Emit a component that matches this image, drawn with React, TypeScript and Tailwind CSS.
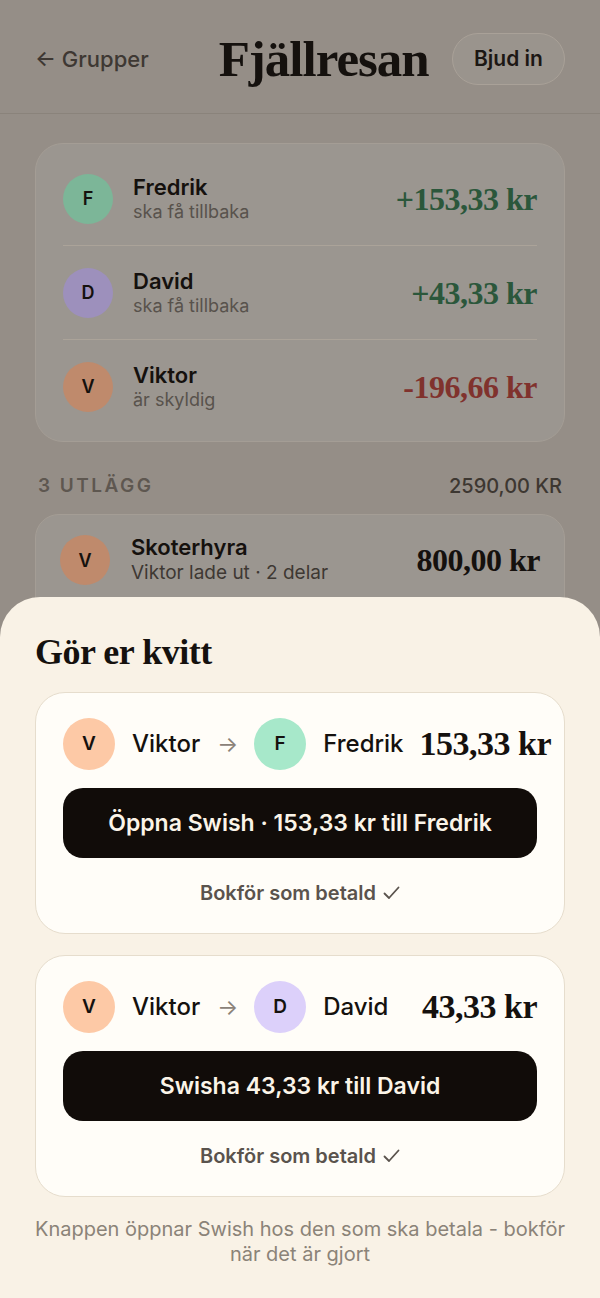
import React from "react";

const serif = "font-['Liberation_Serif','Times_New_Roman',serif]";

function BackRow({
  initial,
  name,
  sub,
  amount,
  avatar,
  amountColor,
}: {
  initial: string;
  name: string;
  sub: string;
  amount: string;
  avatar: string;
  amountColor: string;
}) {
  return (
    <div className="flex h-[93px] items-center gap-5">
      <div
        className={`flex h-[50px] w-[50px] shrink-0 items-center justify-center rounded-full text-[18px] font-semibold text-[#15110e] ${avatar}`}
      >
        {initial}
      </div>
      <div className="flex flex-col">
        <span className="text-[22px] font-semibold leading-[25px] text-[#15110e]">{name}</span>
        <span className="text-[18px] leading-[23px] text-[#58524c]">{sub}</span>
      </div>
      <span className={`ml-auto text-[32px] font-bold leading-none tracking-[-0.5px] ${serif} ${amountColor}`}>
        {amount}
      </span>
    </div>
  );
}

function Avatar({ initial, color }: { initial: string; color: string }) {
  return (
    <div
      className={`flex h-[52px] w-[52px] shrink-0 items-center justify-center rounded-full text-[19px] font-semibold text-[#15110e] ${color}`}
    >
      {initial}
    </div>
  );
}

function Check() {
  return (
    <svg width="17" height="14" viewBox="0 0 17 14" className="ml-[7px] inline-block">
      <path d="M1.5 7.5 L6 12 L15.5 1.5" fill="none" stroke="currentColor" strokeWidth="1.8" strokeLinecap="round" strokeLinejoin="round" />
    </svg>
  );
}

function SettleCard({
  toInitial,
  toName,
  toColor,
  amount,
  button,
  className,
}: {
  toInitial: string;
  toName: string;
  toColor: string;
  amount: string;
  button: string;
  className?: string;
}) {
  return (
    <div
      className={`rounded-[30px] border border-[#e6ddcd] bg-[#fffdf8] px-[27px] pb-[28px] pt-[25px] ${className ?? ""}`}
    >
      <div className="flex items-center justify-between gap-4">
        <div className="flex shrink-0 items-center">
          <Avatar initial="V" color="bg-[#fdc9a6]" />
          <span className="ml-[17px] text-[24px] font-medium text-[#15110e]">Viktor</span>
          <span className="ml-[17px] text-[22px] leading-none text-[#8a8279]">→</span>
          <div className="ml-[16px]">
            <Avatar initial={toInitial} color={toColor} />
          </div>
          <span className="ml-[17px] text-[24px] font-medium text-[#15110e]">{toName}</span>
        </div>
        <span className={`shrink-0 whitespace-nowrap text-[34px] font-bold leading-none tracking-[-0.5px] text-[#15110e] ${serif}`}>
          {amount}
        </span>
      </div>
      <button className="mt-[18px] flex h-[70px] w-full items-center justify-center rounded-[20px] bg-[#110c09] text-[23px] font-semibold text-[#fbf4e8]">
        {button}
      </button>
      <div className="mt-[23px] flex items-center justify-center text-[20px] font-semibold leading-[24px] text-[#5a534d]">
        <span>Bokför som betald</span>
        <Check />
      </div>
    </div>
  );
}

export default function App() {
  return (
    <div className="relative h-[1298px] w-full overflow-hidden bg-[#958e87] font-['Inter','Noto_Sans',sans-serif]">
      {/* dimmed page behind the sheet */}
      <header className="flex items-center border-b border-[#8a837b] px-[35px] pb-[28px] pt-[33px]">
        <span className="text-[22px] font-medium text-[#3e3833]">← Grupper</span>
        <h1 className={`ml-[70px] text-[51px] font-bold leading-none tracking-[-1px] text-[#15110e] ${serif}`}>
          Fjällresan
        </h1>
        <button className="ml-auto flex h-[52px] w-[113px] items-center justify-center rounded-full border border-[#a9a198] bg-[#9a948d] text-[21px] font-semibold text-[#1c1714]">
          Bjud in
        </button>
      </header>

      <div className="mx-[35px] mt-[29px] rounded-[28px] border border-[#a49d95] bg-[#9b9690] px-[27px] py-[8px]">
        <BackRow
          initial="F"
          name="Fredrik"
          sub="ska få tillbaka"
          amount="+153,33 kr"
          avatar="bg-[#7cb698]"
          amountColor="text-[#2b573b]"
        />
        <div className="h-px bg-[#aba399]" />
        <BackRow
          initial="D"
          name="David"
          sub="ska få tillbaka"
          amount="+43,33 kr"
          avatar="bg-[#9d90bc]"
          amountColor="text-[#2b573b]"
        />
        <div className="h-px bg-[#aba399]" />
        <BackRow
          initial="V"
          name="Viktor"
          sub="är skyldig"
          amount="-196,66 kr"
          avatar="bg-[#bf8a6c]"
          amountColor="text-[#80322d]"
        />
      </div>

      <div className="mx-[38px] mt-[32px] flex items-center justify-between leading-[24px]">
        <span className="text-[19px] font-semibold tracking-[0.13em] text-[#5e5750]">3 UTLÄGG</span>
        <span className="text-[20px] font-medium text-[#3d3731]">2590,00 KR</span>
      </div>

      <div className="mx-[35px] mt-[16px] h-[120px] rounded-[24px] border border-[#a49d95] bg-[#9b9690] px-[24px] pt-[20px]">
        <div className="flex items-center gap-[21px]">
          <div className="flex h-[50px] w-[50px] shrink-0 items-center justify-center rounded-full bg-[#bf8a6c] text-[18px] font-semibold text-[#15110e]">
            V
          </div>
          <div className="flex flex-col">
            <span className="text-[22px] font-semibold leading-[25px] text-[#15110e]">Skoterhyra</span>
            <span className="text-[19px] leading-[25px] text-[#3e3833]">Viktor lade ut · 2 delar</span>
          </div>
          <span className={`ml-auto text-[32px] font-bold leading-none tracking-[-0.5px] text-[#15110e] ${serif}`}>
            800,00 kr
          </span>
        </div>
      </div>

      {/* bottom sheet */}
      <div className="absolute inset-x-0 bottom-0 top-[597px] rounded-t-[40px] bg-[#f9f2e6] px-[35px] pt-[35px]">
        <h2 className={`text-[36px] font-bold leading-[40px] tracking-[-0.5px] text-[#15110e] ${serif}`}>
          Gör er kvitt
        </h2>
        <SettleCard
          className="mt-[20px]"
          toInitial="F"
          toName="Fredrik"
          toColor="bg-[#a7e8ca]"
          amount="153,33 kr"
          button="Öppna Swish · 153,33 kr till Fredrik"
        />
        <SettleCard
          className="mt-[21px]"
          toInitial="D"
          toName="David"
          toColor="bg-[#dcd0fa]"
          amount="43,33 kr"
          button="Swisha 43,33 kr till David"
        />
        <p className="-mx-[20px] mt-[20px] text-center text-[20px] leading-[25px] text-[#8b8378]">
          <span className="block whitespace-nowrap">Knappen öppnar Swish hos den som ska betala - bokför</span>
          <span className="block whitespace-nowrap">när det är gjort</span>
        </p>
      </div>
    </div>
  );
}
